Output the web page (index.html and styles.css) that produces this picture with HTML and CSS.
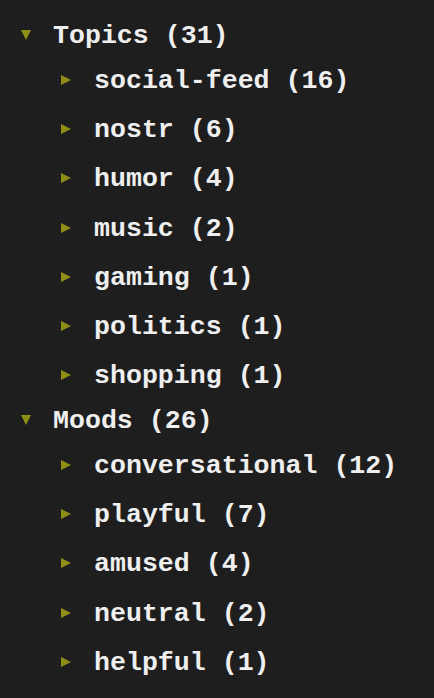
FILE: index.html
```html
<!DOCTYPE html>
<html lang="en">
<head>
    <meta charset="UTF-8">
    <meta name="viewport" content="width=device-width, initial-scale=1.0">
    <title>Tag Tree</title>
    <link rel="stylesheet" href="styles.css">
</head>
<body>
    <ul class="tree">
        <!-- Topics group -->
        <li class="group">
            <div class="row group-row"><span class="caret open"></span>Topics (31)</div>
            <ul class="children">
                <li class="row child-row"><span class="caret"></span>social-feed (16)</li>
                <li class="row child-row"><span class="caret"></span>nostr (6)</li>
                <li class="row child-row"><span class="caret"></span>humor (4)</li>
                <li class="row child-row"><span class="caret"></span>music (2)</li>
                <li class="row child-row"><span class="caret"></span>gaming (1)</li>
                <li class="row child-row"><span class="caret"></span>politics (1)</li>
                <li class="row child-row"><span class="caret"></span>shopping (1)</li>
            </ul>
        </li>

        <!-- Moods group -->
        <li class="group">
            <div class="row group-row"><span class="caret open"></span>Moods (26)</div>
            <ul class="children">
                <li class="row child-row"><span class="caret"></span>conversational (12)</li>
                <li class="row child-row"><span class="caret"></span>playful (7)</li>
                <li class="row child-row"><span class="caret"></span>amused (4)</li>
                <li class="row child-row"><span class="caret"></span>neutral (2)</li>
                <li class="row child-row"><span class="caret"></span>helpful (1)</li>
            </ul>
        </li>
    </ul>
</body>
</html>
```

FILE: styles.css
```css
/* Page reset and dark background */
html, body {
    margin: 0;
    padding: 0;
    height: 100%;
    background-color: #1e1e1e;
    color: #efefef;
    font-family: "Courier New", "Nimbus Mono PS", "Nimbus Mono L", FreeMono, Courier, "Liberation Mono", monospace;
    font-weight: bold;
    font-size: 26.6px;
}

ul {
    list-style: none;
    margin: 0;
    padding: 0;
}

.tree {
    padding-top: 16px;
}

/* Each line of the tree */
.row {
    display: flex;
    align-items: center;
    white-space: nowrap;
}

.group-row {
    height: 40px;
    padding-left: 21px;
}

.child-row {
    height: 49.3px;
    padding-left: 61px;
}

/* Olive triangle toggles */
.caret {
    flex: none;
    width: 0;
    height: 0;
    border-top: 5.5px solid transparent;
    border-bottom: 5.5px solid transparent;
    border-left: 10px solid #8f8f17;
    margin-right: 23px;
    margin-top: -2px;
}

.caret.open {
    border-left: 5.5px solid transparent;
    border-right: 5.5px solid transparent;
    border-top: 10px solid #8f8f17;
    border-bottom: none;
    margin-right: 22px;
    margin-top: -2px;
}
```
